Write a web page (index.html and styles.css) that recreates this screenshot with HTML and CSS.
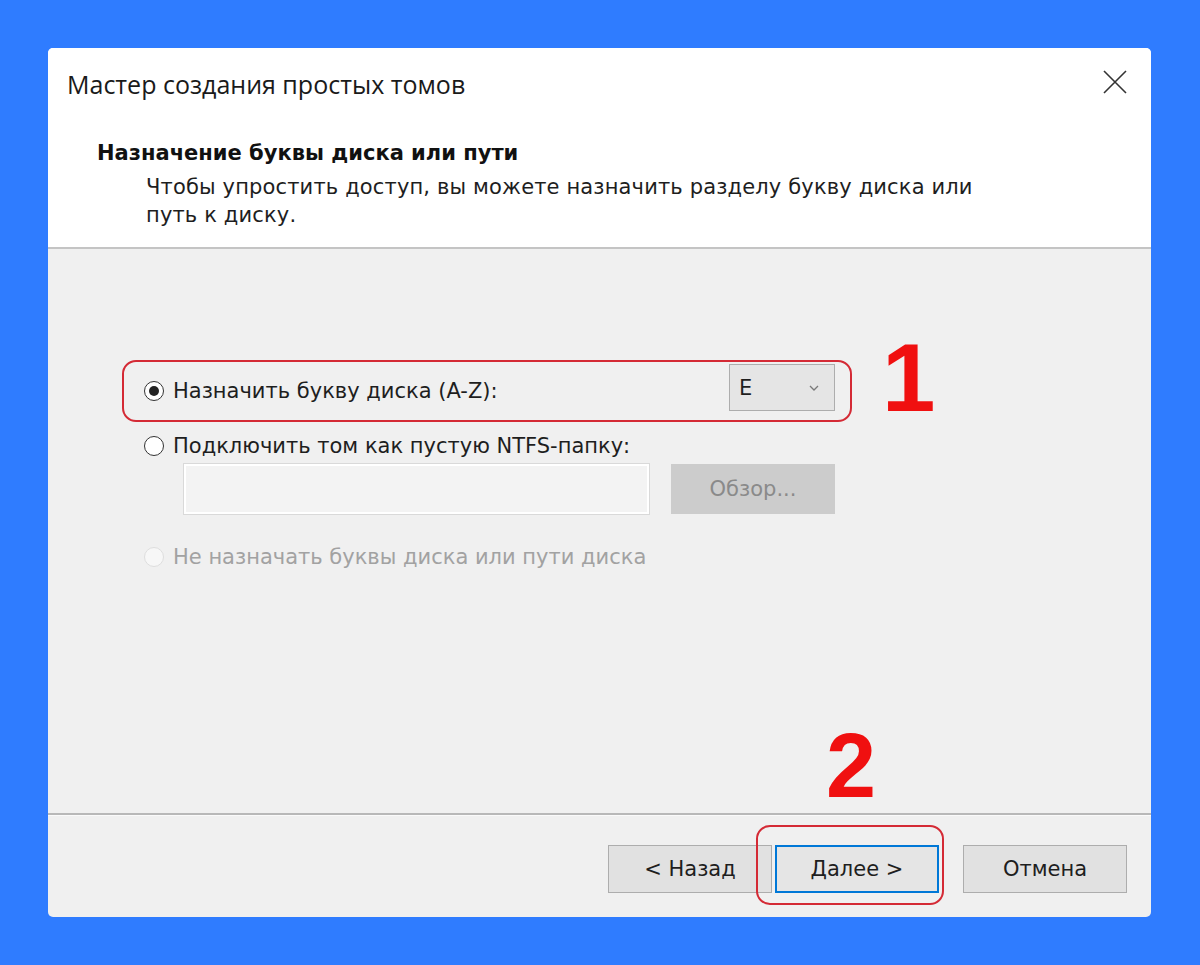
FILE: index.html
```html
<!DOCTYPE html>
<html>
<head>
    <title>Мастер создания простых томов</title>
    <link rel="stylesheet" href="styles.css">
</head>
<body>
    <div class="dialog">
        <div class="top">
            <div class="titlebar">
                <span class="title">Мастер создания простых томов</span>
                <svg class="close" width="24" height="24" viewBox="0 0 24 24">
                    <path d="M1 1 L23 23 M23 1 L1 23" stroke="#333" stroke-width="1.6" fill="none"/>
                </svg>
            </div>
            <h2 class="step">Назначение буквы диска или пути</h2>
            <p class="hint">Чтобы упростить доступ, вы можете назначить разделу букву диска или<br>путь к диску.</p>
        </div>

        <div class="content">
            <div class="pick">
                <div class="marked">
                    <label class="opt">
                        <span class="radio checked"></span>
                        Назначить букву диска (A-Z):
                    </label>
                    <div class="combo">
                        <span>E</span>
                        <svg width="12" height="8" viewBox="0 0 12 8">
                            <path d="M2 2 L6 6 L10 2" stroke="#7a7a7a" stroke-width="1.3" fill="none"/>
                        </svg>
                    </div>
                </div>
                <span class="num">1</span>
            </div>

            <label class="opt second">
                <span class="radio"></span>
                Подключить том как пустую NTFS-папку:
            </label>
            <div class="folder">
                <div class="pathbox"></div>
                <div class="browse">Обзор...</div>
            </div>

            <label class="opt off">
                <span class="radio"></span>
                Не назначать буквы диска или пути диска
            </label>
        </div>

        <div class="bottom">
            <span class="num two">2</span>
            <span class="ring"></span>
            <div class="buttons">
                <button class="btn">&lt; Назад</button>
                <button class="btn next">Далее &gt;</button>
                <button class="btn cancel">Отмена</button>
            </div>
        </div>
    </div>
</body>
</html>
```

FILE: styles.css
```css
body {
    margin: 0;
    padding: 48px;
    background-color: #2f7cff;
    font-family: "DejaVu Sans", Verdana, sans-serif;
    color: #1e1e1e;
}

.dialog {
    width: 1103px;
    height: 869px;
    background-color: #f0f0f0;
    border-radius: 5px;
    overflow: hidden;
    display: flex;
    flex-direction: column;
}

.top {
    background-color: #fff;
    height: 201px;
    border-bottom: 2px solid #c4c4c4;
    box-sizing: border-box;
}

.titlebar {
    display: flex;
    justify-content: space-between;
    align-items: center;
    padding: 22px 24px 0 19px;
    height: 28px;
}

.title {
    font-family: "Open Sans", sans-serif;
    font-size: 25px;
    color: #1a1a1a;
}

.close {
    margin-top: -4px;
}

.step {
    margin: 43px 0 0 49px;
    font-size: 21px;
    font-weight: bold;
    color: #111;
}

.hint {
    margin: 8px 0 0 98px;
    font-size: 21px;
    line-height: 28px;
    letter-spacing: 0.15px;
    color: #1e1e1e;
}

.content {
    flex: 1;
    padding: 111px 0 0 74px;
    border-bottom: 2px solid #b8b8b8;
}

.pick {
    display: flex;
    align-items: flex-start;
    gap: 30px;
}

.marked {
    width: 730px;
    height: 62px;
    box-sizing: border-box;
    border: 2px solid #d42a35;
    border-radius: 14px;
    display: flex;
    align-items: center;
    justify-content: space-between;
    padding: 0 15px 0 20px;
}

.opt {
    display: flex;
    align-items: center;
    gap: 9px;
    font-size: 21px;
    color: #1e1e1e;
}

.radio {
    width: 18px;
    height: 18px;
    border: 1px solid #333;
    border-radius: 50%;
    background-color: #fff;
    position: relative;
    box-sizing: content-box;
}

.radio.checked::after {
    content: "";
    position: absolute;
    left: 4px;
    top: 4px;
    width: 10px;
    height: 10px;
    border-radius: 50%;
    background-color: #222;
}

.combo {
    width: 106px;
    height: 47px;
    box-sizing: border-box;
    margin-bottom: 7px;
    background-color: #e5e5e5;
    border: 1px solid #adadad;
    display: flex;
    align-items: center;
    justify-content: space-between;
    padding: 0 14px 0 9px;
    font-size: 21px;
}

.num {
    font-family: "Liberation Sans", Arial, sans-serif;
    color: #f01010;
    font-weight: bold;
    font-size: 96px;
    line-height: 70px;
}

.pick .num {
    margin-top: -17px;
}

.second {
    margin: 12px 0 0 22px;
}

.folder {
    display: flex;
    gap: 22px;
    margin: 6px 0 0 62px;
}

.pathbox {
    width: 465px;
    height: 50px;
    box-sizing: border-box;
    background-color: #f3f3f3;
    border: 2px solid #fff;
    outline: 1px solid #d9d9d9;
}

.browse {
    width: 164px;
    height: 50px;
    background-color: #cccccc;
    color: #8a8a8a;
    font-size: 21px;
    display: flex;
    align-items: center;
    justify-content: center;
}

.off {
    margin: 31px 0 0 22px;
    color: #a2a2a2;
}

.off .radio {
    border-color: #dedede;
    background-color: #f7f7f7;
}

.bottom {
    height: 101px;
    position: relative;
    border-top: 1px solid #fafafa;
}

.buttons {
    display: flex;
    justify-content: flex-end;
    padding: 29px 24px 0 0;
}

.btn {
    width: 164px;
    height: 48px;
    background-color: #e1e1e1;
    border: 1px solid #adadad;
    font-family: "DejaVu Sans", Verdana, sans-serif;
    font-size: 21px;
    color: #1e1e1e;
}

.next {
    margin-left: 3px;
    border: 2px solid #0078d7;
    background-color: #e5e5e5;
}

.cancel {
    margin-left: 24px;
}

.two {
    position: absolute;
    left: 778px;
    top: -85px;
    font-size: 90px;
}

.ring {
    position: absolute;
    left: 708px;
    top: 9px;
    width: 188px;
    height: 80px;
    box-sizing: border-box;
    border: 2px solid #d42a35;
    border-radius: 14px;
}
```
